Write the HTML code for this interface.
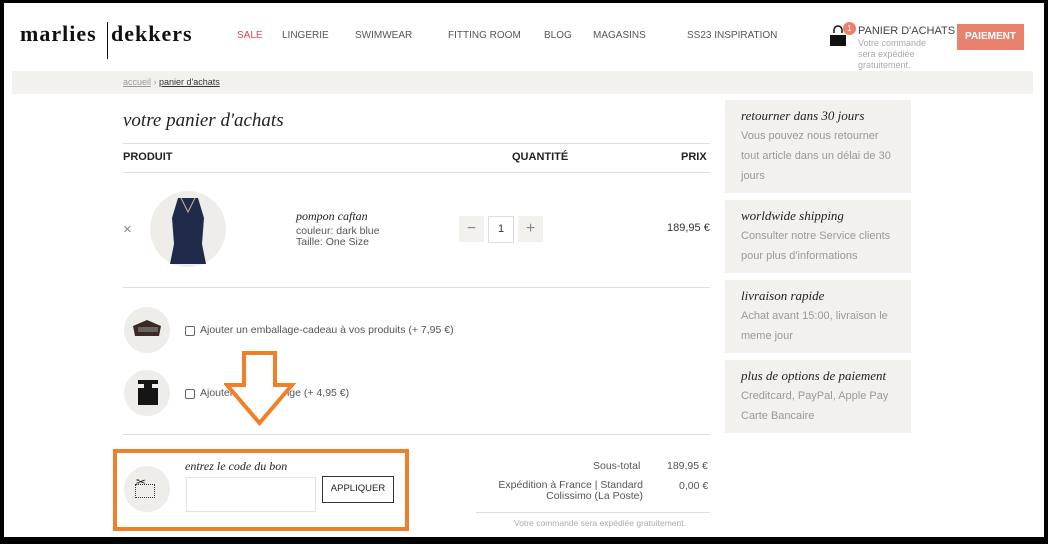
<!DOCTYPE html>
<html><head><meta charset="utf-8"><style>
*{margin:0;padding:0;box-sizing:border-box}
body{width:1048px;height:544px;background:#000;position:relative;overflow:hidden;font-family:"Liberation Sans",sans-serif;color:#333}
#pg{position:absolute;left:4px;top:3px;width:1040px;height:534px;background:#fff;overflow:hidden}
.a{position:absolute;white-space:nowrap}
.nav{font-size:10px;color:#555;top:27px}
.ser{font-family:"Liberation Serif",serif;font-style:italic;color:#222}
.side{position:absolute;left:721px;width:186px;background:#f3f1ee;padding:8px 16px}
.side h4{font-family:"Liberation Serif",serif;font-style:italic;font-weight:normal;font-size:13px;color:#222;line-height:16px;margin-bottom:2px}
.side p{font-size:11px;color:#999;line-height:20px}
.circ{position:absolute;border-radius:50%;background:#efede9}
.cb{position:absolute;width:10px;height:10px;border:1px solid #666;border-radius:2px;background:#fff}
.hr{position:absolute;height:1px;background:#ddd}
.logo{font-family:'Liberation Serif',serif;font-weight:bold;font-size:22px;letter-spacing:1px;color:#111;top:18px}
</style></head><body><div id="pg">
<div class="a logo" style="left:16px">marlies</div>
<div class="a logo" style="left:107px">dekkers</div>
<div class="a" style="left:103px;top:19px;width:1px;height:37px;background:#111"></div>
<div class="a nav" style="left:233px;color:#e0474c">SALE</div>
<div class="a nav" style="left:278px">LINGERIE</div>
<div class="a nav" style="left:351px">SWIMWEAR</div>
<div class="a nav" style="left:444px">FITTING ROOM</div>
<div class="a nav" style="left:540px">BLOG</div>
<div class="a nav" style="left:589px">MAGASINS</div>
<div class="a nav" style="left:683px">SS23 INSPIRATION</div>
<svg class="a" style="left:824px;top:22px" width="20" height="22"><path d="M6 8V5a4 4 0 0 1 8 0v3" fill="none" stroke="#111" stroke-width="1.5"/><path d="M2 10h16v11H2z" fill="#111"/></svg>
<div class="a" style="left:839px;top:19px;width:13px;height:13px;border-radius:50%;background:#e8826e;color:#fff;font-size:8px;text-align:center;line-height:13px">1</div>
<div class="a" style="left:854px;top:22px;font-size:11px;color:#444">PANIER D'ACHATS</div>
<div class="a" style="left:854px;top:35px;font-size:9px;color:#aaa;line-height:11px">Votre commande<br>sera expédiée<br>gratuitement.</div>
<div class="a" style="left:953px;top:21px;width:67px;height:26px;background:#e8826e;color:#fff;font-size:10px;font-weight:bold;text-align:center;line-height:26px">PAIEMENT</div>
<div class="a" style="left:8px;top:68px;width:1021px;height:23px;background:#f2f1ee"></div>
<div class="a" style="left:119px;top:74px;font-size:9px;color:#999"><u>accueil</u> &rsaquo; <u style="color:#333">panier d'achats</u></div>
<div class="a ser" style="left:119px;top:107px;font-size:19px">votre panier d'achats</div>
<div class="hr" style="left:119px;top:140px;width:587px"></div>
<div class="hr" style="left:119px;top:169px;width:587px"></div>
<div class="a" style="left:119px;top:148px;font-size:11px;font-weight:bold;color:#222">PRODUIT</div>
<div class="a" style="left:508px;top:148px;font-size:11px;font-weight:bold;color:#222">QUANTITÉ</div>
<div class="a" style="left:677px;top:148px;font-size:11px;font-weight:bold;color:#222">PRIX</div>
<div class="a" style="left:119px;top:218px;font-size:15px;color:#888">×</div>
<div class="circ" style="left:146px;top:188px;width:76px;height:76px"></div>
<svg class="a" style="left:164px;top:191px" width="40" height="74"><path d="M10 4l10 0l10 0l6 20l-2 26l4 20H2l4-20L4 24z" fill="#1f2a4a"/><path d="M13 4l7 14l7-14" fill="none" stroke="#c8b89a" stroke-width="1"/></svg>
<div class="a ser" style="left:292px;top:206px;font-size:12px">pompon caftan</div>
<div class="a" style="left:292px;top:223px;font-size:10.5px;color:#555;line-height:11px">couleur: dark blue<br>Taille: One Size</div>
<div class="a" style="left:455px;top:213px;width:25px;height:26px;background:#f2f1ee;text-align:center;line-height:26px;color:#888">−</div>
<div class="a" style="left:484px;top:213px;width:26px;height:27px;border:1px solid #ddd;text-align:center;line-height:25px;font-size:11px">1</div>
<div class="a" style="left:514px;top:213px;width:25px;height:26px;background:#f2f1ee;text-align:center;line-height:26px;color:#888">+</div>
<div class="a" style="left:663px;top:219px;font-size:11px;color:#333">189,95 €</div>
<div class="hr" style="left:119px;top:284px;width:587px"></div>
<div class="circ" style="left:120px;top:304px;width:46px;height:46px"></div>
<svg class="a" style="left:126px;top:315px" width="34" height="22"><path d="M3 8l14-6l14 6l-2 10H5z" fill="#3a2a22"/><path d="M8 9h20v5H8z" fill="#6a6460"/></svg>
<div class="cb" style="left:181px;top:323px"></div>
<div class="a" style="left:196px;top:321px;font-size:10.5px;color:#555">Ajouter un emballage-cadeau à vos produits (+ 7,95 €)</div>
<div class="circ" style="left:120px;top:367px;width:46px;height:46px"></div>
<svg class="a" style="left:132px;top:374px" width="24" height="30"><path d="M2 3h20v4h-6v4h6v17H2V11h6V7H2z" fill="#151515"/></svg>
<div class="cb" style="left:181px;top:386px"></div>
<div class="a" style="left:196px;top:384px;font-size:10.5px;color:#555">Ajouter un sac à linge (+ 4,95 €)</div>
<div class="hr" style="left:119px;top:431px;width:587px"></div>
<svg class="a" style="left:220px;top:348px" width="72" height="76"><path d="M20 2h31v32h17L35.5 72L3 34h17z" fill="#fff" stroke="#f07f2a" stroke-width="4" stroke-linejoin="miter"/></svg>
<div class="a" style="left:109px;top:446px;width:296px;height:82px;border:4px solid #f07f2a"></div>
<div class="circ" style="left:120px;top:463px;width:46px;height:46px"></div>
<div class="a" style="left:131px;top:481px;width:20px;height:14px;border:1px dotted #333"></div>
<div class="a" style="left:132px;top:472px;font-size:12px;color:#111">✂</div>
<div class="a ser" style="left:181px;top:456px;font-size:12px">entrez le code du bon</div>
<div class="a" style="left:182px;top:474px;width:130px;height:35px;border:1px solid #e2e2e2"></div>
<div class="a" style="left:318px;top:473px;width:72px;height:27px;border:1.5px solid #333;text-align:center;line-height:24px;font-size:9.5px;color:#222">APPLIQUER</div>
<div class="a" style="left:589px;top:457px;font-size:10.5px;color:#555">Sous-total</div>
<div class="a" style="left:663px;top:457px;font-size:10.5px;color:#555">189,95 €</div>
<div class="a" style="left:488px;top:477px;width:151px;font-size:10.5px;color:#555;line-height:11px;text-align:right;white-space:normal">Expédition à France | Standard Colissimo (La Poste)</div>
<div class="a" style="left:675px;top:477px;font-size:10.5px;color:#555">0,00 €</div>
<div class="hr" style="left:472px;top:509px;width:234px"></div>
<div class="a" style="left:510px;top:515px;font-size:8.5px;color:#aaa">Votre commande sera expédiée gratuitement.</div>
<div class="side" style="top:97px;height:93px"><h4>retourner dans 30 jours</h4><p>Vous pouvez nous retourner tout article dans un délai de 30 jours</p></div>
<div class="side" style="top:197px;height:73px"><h4>worldwide shipping</h4><p>Consulter notre Service clients pour plus d'informations</p></div>
<div class="side" style="top:277px;height:73px"><h4>livraison rapide</h4><p>Achat avant 15:00, livraison le meme jour</p></div>
<div class="side" style="top:357px;height:73px"><h4>plus de options de paiement</h4><p>Creditcard, PayPal, Apple Pay Carte Bancaire</p></div>
</div></body></html>
